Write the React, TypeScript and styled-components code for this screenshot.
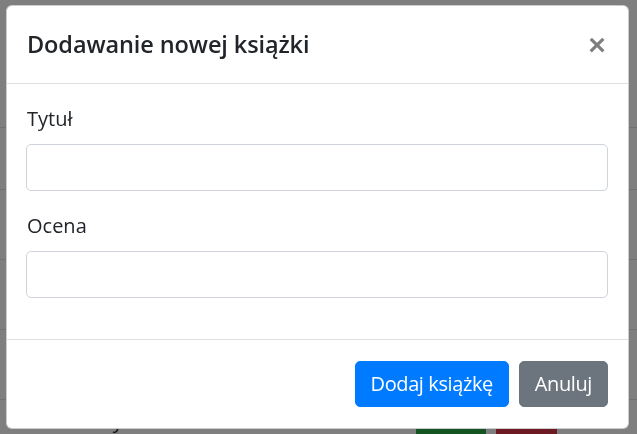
import React from "react";
import styled, { createGlobalStyle } from "styled-components";

const Global = createGlobalStyle`
  html, body { margin: 0; padding: 0; }
  body {
    width: 637px;
    height: 434px;
    overflow: hidden;
    background: #ffffff;
    font-family: "Open Sans", "Noto Sans", "Liberation Sans", sans-serif;
    color: #212529;
  }
  * { box-sizing: border-box; }
`;

const Page = styled.div`
  width: 637px;
  height: 434px;
  overflow: hidden;
  padding-top: 127px;
`;

const Row = styled.div<{ $h: number }>`
  height: ${(p) => p.$h}px;
  border-top: 1px solid #dee2e6;
  display: flex;
  align-items: flex-start;
  padding: 6px 80px 0 90px;
  gap: 10px;
  font-size: 20px;
  line-height: 30px;
`;

const RowText = styled.span`
  flex: 1;
`;

const SmallBtn = styled.span<{ $bg: string; $w: number }>`
  width: ${(p) => p.$w}px;
  height: 40px;
  margin-top: 14px;
  background: ${(p) => p.$bg};
  color: #fff;
  font-size: 17px;
  display: flex;
  align-items: center;
  justify-content: center;
`;

const Backdrop = styled.div`
  position: fixed;
  inset: 0;
  background: rgba(0, 0, 0, 0.5);
  padding: 5px 0 0 6px;
`;

const Modal = styled.div`
  width: 623px;
  background: #fff;
  border: 1px solid rgba(0, 0, 0, 0.2);
  border-radius: 6px;
  display: flex;
  flex-direction: column;
`;

const Header = styled.div`
  display: flex;
  align-items: flex-start;
  justify-content: space-between;
  padding: 20px;
  border-bottom: 1px solid #dee2e6;
  height: 78px;
`;

const Title = styled.h5`
  margin: 0;
  font-size: 23.5px;
  font-weight: 600;
  line-height: 37px;
  letter-spacing: -0.1px;
  color: #212529;
`;

const Close = styled.button`
  border: 0;
  background: transparent;
  padding: 0;
  margin: 2px 0 0 0;
  width: 22px;
  height: 34px;
  font-size: 30px;
  font-weight: 700;
  line-height: 34px;
  color: #000;
  opacity: 0.5;
  font-family: "Liberation Sans", sans-serif;
`;

const Body = styled.div`
  padding: 20px 20px 0 20px;
  height: 255px;
`;

const Group = styled.div`
  margin-bottom: 20px;
`;

const Label = styled.label`
  display: block;
  font-size: 20px;
  line-height: 30px;
  margin-bottom: 10px;
  color: #212529;
`;

const Input = styled.input`
  display: block;
  width: 582px;
  height: 47px;
  margin-left: -1px;
  border: 1px solid #ced4da;
  border-radius: 5px;
  background: #fff;
  font-size: 20px;
  padding: 7px 15px;
`;

const Footer = styled.div`
  border-top: 1px solid #dee2e6;
  display: flex;
  justify-content: flex-end;
  align-items: center;
  gap: 10px;
  padding: 20px 20px 20px 15px;
  height: 89px;
`;

const Button = styled.button<{ $variant: "primary" | "secondary" }>`
  height: 46px;
  border: 1px solid ${(p) => (p.$variant === "primary" ? "#007bff" : "#6c757d")};
  background: ${(p) => (p.$variant === "primary" ? "#007bff" : "#6c757d")};
  color: #fff;
  border-radius: 5px;
  font-family: inherit;
  font-size: 20px;
  line-height: 30px;
  letter-spacing: -0.4px;
  padding: 7px 15px;
`;

export default function App() {
  return (
    <>
      <Global />
      <Page>
        <Row $h={62} />
        <Row $h={70} />
        <Row $h={70} />
        <Row $h={70} />
        <Row $h={70}>
          <RowText>Gry</RowText>
          <SmallBtn $bg="#28a745" $w={70}>Edytuj</SmallBtn>
          <SmallBtn $bg="#dc3545" $w={61}>Usuń</SmallBtn>
        </Row>
      </Page>
      <Backdrop>
        <Modal>
          <Header>
            <Title>Dodawanie nowej książki</Title>
            <Close aria-label="Close">×</Close>
          </Header>
          <Body>
            <Group>
              <Label>Tytuł</Label>
              <Input type="text" />
            </Group>
            <Group>
              <Label>Ocena</Label>
              <Input type="text" />
            </Group>
          </Body>
          <Footer>
            <Button $variant="primary">Dodaj książkę</Button>
            <Button $variant="secondary">Anuluj</Button>
          </Footer>
        </Modal>
      </Backdrop>
    </>
  );
}
